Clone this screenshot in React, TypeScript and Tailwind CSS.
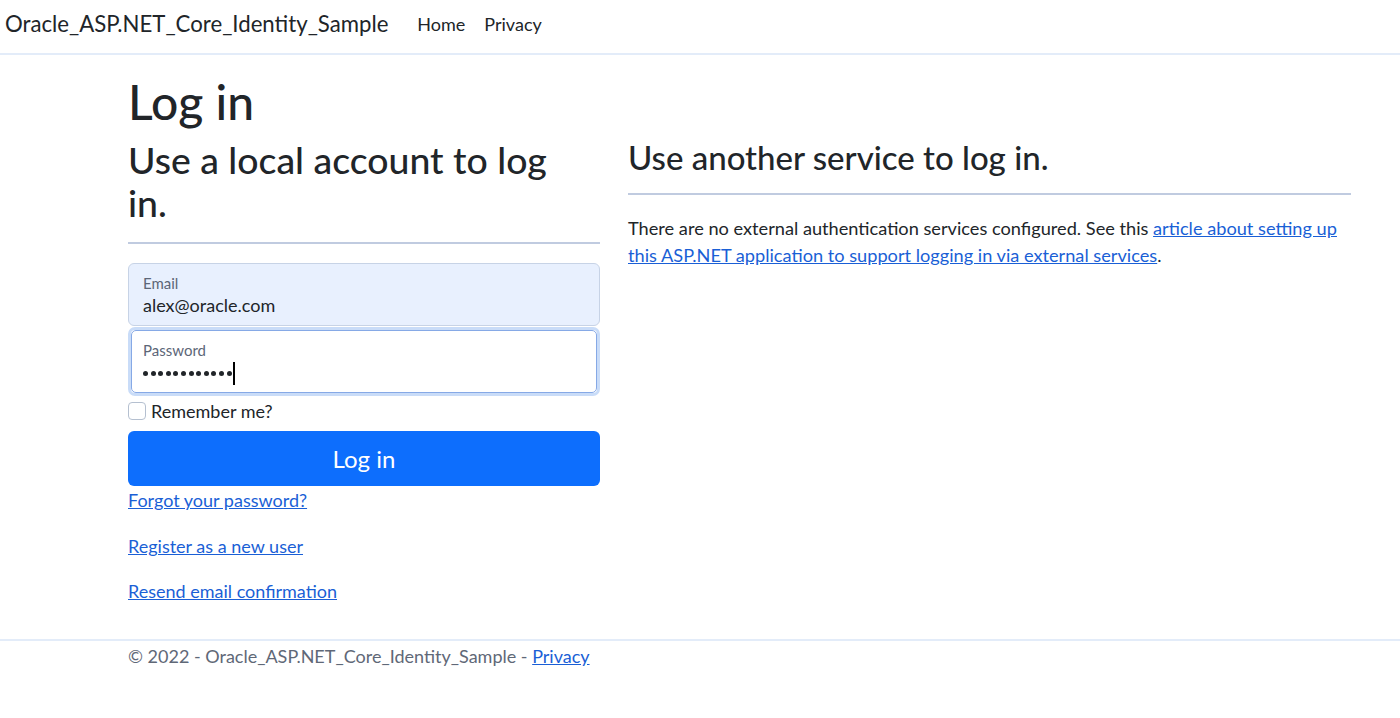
import React from "react";

export default function App() {
  const font = "font-['Lato','Open_Sans',sans-serif]";
  const dots = Array.from({ length: 12 });
  return (
    <div className={`${font} min-h-[718px] bg-white text-[#212529] text-[18px] leading-[27px]`}>
      {/* Navbar */}
      <nav className="h-[55px] border-b-2 border-[#e3ecf9] flex items-center pl-[5px] pb-[5px]">
        <span className="text-[22.2px] leading-[32px] text-[#212529]">Oracle_ASP.NET_Core_Identity_Sample</span>
        <div className="flex ml-[29px] gap-[19px] text-[18px] text-[#212529]">
          <span>Home</span>
          <span>Privacy</span>
        </div>
      </nav>

      {/* Main */}
      <main className="pl-[128px] pr-[49px] pt-[19px] h-[584px]">
        <h1 className="text-[48px] leading-[56px] font-medium mb-[8px]">Log in</h1>
        <div className="flex gap-[28px]">
          {/* Left column */}
          <section className="w-[472px] shrink-0">
            <h2 className="text-[37.4px] leading-[43px] font-medium">
              Use a local account to log
              <br />
              in.
            </h2>
            <hr className="mt-[18px] mb-[19px] border-0 h-[2px] bg-[#c0cbe0]" />
            <div className="h-[63px] rounded-[6px] border border-[#c7d3e6] bg-[#e8f0fe] px-[14px] pt-[9px]">
              <div className="text-[15px] leading-[20px] text-[#5c6677]">Email</div>
              <div className="text-[18px] leading-[24px] text-[#212529]">alex@oracle.com</div>
            </div>
            <div className="mt-[1px] h-[69px] rounded-[7px] border-[3px] border-[#c9dcf8]">
              <div className="h-full rounded-[5px] border border-[#86a9e6] bg-white px-[11px] pt-[9px]">
                <div className="text-[15px] leading-[20px] text-[#5c6677]">Password</div>
                <div className="flex items-center h-[26px]">
                  <div className="flex gap-[2.6px]">
                    {dots.map((_, i) => (
                      <span key={i} className="block w-[5px] h-[5px] rounded-full bg-[#212529]"></span>
                    ))}
                  </div>
                  <span className="ml-[1px] w-[2px] h-[23px] bg-black"></span>
                </div>
              </div>
            </div>
            <div className="flex items-center h-[30px]">
              <span className="w-[18px] h-[18px] rounded-[4px] border border-[#b5c0d0] bg-white"></span>
              <span className="ml-[5px] text-[18px]">Remember me?</span>
            </div>
            <button className="mt-[5px] w-full h-[55px] rounded-[6px] bg-[#0d6efd] text-white text-[24px] leading-[32px]">
              Log in
            </button>
            <div className="mt-[1px] flex flex-col text-[18px] text-[#1a5fd6]">
              <a className="underline h-[27px] leading-[27px]">Forgot your password?</a>
              <a className="underline mt-[19px] h-[27px] leading-[27px]">Register as a new user</a>
              <a className="underline mt-[18px] h-[27px] leading-[27px]">Resend email confirmation</a>
            </div>
          </section>

          {/* Right column */}
          <section className="flex-1">
            <h3 className="text-[33px] leading-[38px] font-medium">Use another service to log in.</h3>
            <hr className="mt-[17px] mb-[20px] border-0 h-[2px] bg-[#c0cbe0]" />
            <p className="text-[18.2px] leading-[27px]">
              There are no external authentication services configured. See this{" "}
              <a className="underline text-[#1a5fd6]">
                article about setting up
                <br />
                this ASP.NET application to support logging in via external services
              </a>
              .
            </p>
          </section>
        </div>
      </main>

      {/* Footer */}
      <footer className="border-t-2 border-[#e3ecf9] pl-[128px] pt-[2px]">
        <span className="text-[18px] leading-[27px] text-[#5f6877]">
          © 2022 - Oracle_ASP.NET_Core_Identity_Sample - <a className="underline text-[#1a5fd6]">Privacy</a>
        </span>
      </footer>
    </div>
  );
}
